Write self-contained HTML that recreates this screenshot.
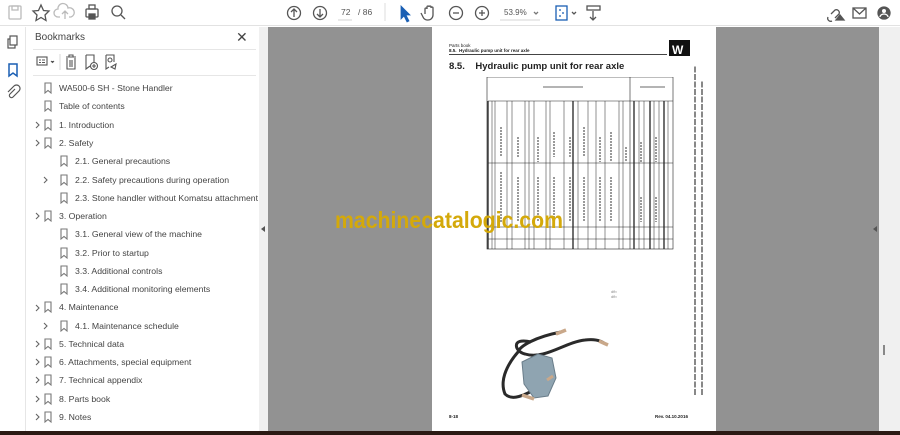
<!DOCTYPE html>
<html><head><meta charset="utf-8"><style>
*{margin:0;padding:0;box-sizing:border-box}
body{width:900px;height:435px;overflow:hidden;background:#fff;font-family:"Liberation Sans",sans-serif;position:relative}
.abs{position:absolute}
.bm{position:absolute;font-size:8.7px;color:#444;white-space:nowrap}
</style></head><body>
<div class="abs" style="left:0;top:0;width:900px;height:26px;background:#fff;border-bottom:1px solid #e2e2e2"></div>
<svg class="abs" style="left:0;top:0" width="900" height="27" fill="none" stroke="#555" stroke-width="1.3">
 <rect x="9" y="6" width="12" height="13" rx="1" stroke="#bbb"/><rect x="12" y="6" width="6" height="4" stroke="#bbb"/>
 <path d="M41 5 L43.5 10.5 L49 11 L45 15 L46 20.5 L41 17.5 L36 20.5 L37 15 L33 11 L38.5 10.5Z"/>
 <path d="M60 17 h-2 a4 4 0 0 1 0-8 a5 5 0 0 1 10-1 a4 4 0 0 1 3 9 h-2 M65 19 v-8 M62 14 l3-3 3 3" stroke="#bbb"/>
 <rect x="86" y="9" width="12" height="8" rx="1"/><rect x="89" y="5" width="6" height="4"/><rect x="89" y="14" width="6" height="5" fill="#555"/>
 <circle cx="117" cy="11" r="5"/><path d="M121 15 l4 4"/>
 <circle cx="294" cy="13" r="6.5"/><path d="M294 17 v-8 M291 12 l3-3 3 3"/>
 <circle cx="320" cy="13" r="6.5"/><path d="M320 9 v8 M317 14 l3 3 3-3"/>
 <path d="M338 20 h14" stroke="#ddd"/>
 <path d="M385 3 v18" stroke="#e5e5e5"/>
 <path d="M401 6 v13 l3-3 3 6 2-1-3-6 h4z" fill="#1a5fb4" stroke="#1a5fb4" stroke-width="0.8"/>
 <path d="M425 14 v-5 a1 1 0 0 1 2 0 v-2 a1 1 0 0 1 2 0 v0 a1 1 0 0 1 2 0 v1 a1 1 0 0 1 2 0 v7 a5 5 0 0 1 -5 5 h-1 a5 5 0 0 1 -4-3 l-2-4"/>
 <circle cx="456" cy="13" r="6.5"/><path d="M453 13 h6"/>
 <circle cx="482" cy="13" r="6.5"/><path d="M479 13 h6 M482 10 v6"/>
 <path d="M500 20 h40" stroke="#ddd"/><path d="M534 12 l2 2 2-2" stroke="#777"/>
 <rect x="556" y="6" width="11" height="14" stroke="#1a5fb4"/><path d="M559 10 h2 M562 13 h2 M559 16 h2" stroke="#1a5fb4"/><path d="M572 12 l2 2 2-2" stroke="#555"/>
 <rect x="587" y="6" width="13" height="4"/><path d="M593 11 v9 M590 17 l3 3 3-3"/>
 <path d="M831 14 l4-4 a3 3 0 0 1 4 4 l-4 4 M828 17 a3 3 0 0 0 4 4"/><path d="M836 20 l4-5 4 5z" fill="#555"/>
 <rect x="853" y="8" width="13" height="10"/><path d="M853 8 l6.5 6 6.5-6"/>
 <circle cx="884" cy="13" r="6" fill="#555"/><circle cx="884" cy="11" r="2" fill="#fff" stroke="none"/><path d="M880 17 a4 3 0 0 1 8 0" stroke="#fff"/>
</svg>
<div class="abs" style="left:341px;top:7px;font-size:8.5px;color:#555">72</div>
<div class="abs" style="left:358px;top:7px;font-size:8.5px;color:#555">/ 86</div>
<div class="abs" style="left:504px;top:8px;font-size:8px;color:#555">53.9%</div>

<div class="abs" style="left:0;top:27px;width:26px;height:405px;background:#fff;border-right:1px solid #e6e6e6"></div>
<svg class="abs" style="left:0;top:27px" width="26" height="80" fill="none" stroke="#555" stroke-width="1.2">
 <rect x="8" y="12" width="7" height="9"/><rect x="10" y="9" width="7" height="9" fill="#fff"/>
 <path d="M9 37 h8 v12 l-4-3 -4 3z" stroke="#1a5fb4" stroke-width="1.5"/>
 <path d="M15 62 l-5 5 a2 2 0 0 0 3 3 l6-6 a3.5 3.5 0 0 0-5-5 l-6 6"/>
</svg>
<div class="abs" style="left:27px;top:27px;width:232px;height:405px;background:#fff"></div>
<div class="abs" style="left:259px;top:27px;width:9px;height:405px;background:#f0f0f0"></div>
<div class="abs" style="left:35px;top:32px;font-size:10px;color:#444">Bookmarks</div>
<div class="abs" style="left:236px;top:29px;font-size:14px;color:#444">✕</div>
<div class="abs" style="left:33px;top:49px;width:223px;height:1px;background:#e6e6e6"></div>
<div class="abs" style="left:33px;top:75px;width:223px;height:1px;background:#e6e6e6"></div>
<svg class="abs" style="left:30px;top:50px" width="100" height="25" fill="none" stroke="#555" stroke-width="1.1">
 <rect x="7" y="7" width="10" height="8"/><path d="M9 10 h2 M12 10 h3 M9 12.5 h2 M12 12.5 h3"/><path d="M21 11 l1.5 1.5 1.5-1.5" fill="#555"/>
 <path d="M30 4 v16" stroke="#ddd"/>
 <path d="M36 7 h10 M39 7 v-2 h4 v2 M37 8 v11 h8 v-11 M40 10 v7 M42 10 v7"/>
 <path d="M56 5 h8 v8 M56 5 v14 l4-3"/><circle cx="64" cy="16" r="3.5"/><path d="M64 14 v4 M62 16 h4"/>
 <path d="M76 5 h8 v7 M76 5 v14 l3-2"/><circle cx="80" cy="10" r="2"/><path d="M81 17 l5-3 -1 5z"/>
</svg>
<svg class="abs" style="left:0;top:0" width="260" height="432" fill="none" stroke="#666" stroke-width="1.1">
 <path d="M36 122 l3 3 -3 3 M36 140 l3 3 -3 3 M44 177 l3 3 -3 3 M36 213 l3 3 -3 3 M36 305 l3 3 -3 3 M44 323 l3 3 -3 3 M36 341 l3 3 -3 3 M36 359 l3 3 -3 3 M36 377 l3 3 -3 3 M36 396 l3 3 -3 3 M36 414 l3 3 -3 3"/>
 <g stroke="#777">
 <path d="M45 83 h6 v10 l-3-2.5 -3 2.5z"/><path d="M45 101 h6 v10 l-3-2.5 -3 2.5z"/><path d="M45 120 h6 v10 l-3-2.5 -3 2.5z"/><path d="M45 138 h6 v10 l-3-2.5 -3 2.5z"/>
 <path d="M61 156 h6 v10 l-3-2.5 -3 2.5z"/><path d="M61 175 h6 v10 l-3-2.5 -3 2.5z"/><path d="M61 193 h6 v10 l-3-2.5 -3 2.5z"/>
 <path d="M45 211 h6 v10 l-3-2.5 -3 2.5z"/><path d="M61 229 h6 v10 l-3-2.5 -3 2.5z"/><path d="M61 248 h6 v10 l-3-2.5 -3 2.5z"/><path d="M61 266 h6 v10 l-3-2.5 -3 2.5z"/><path d="M61 284 h6 v10 l-3-2.5 -3 2.5z"/>
 <path d="M45 302 h6 v10 l-3-2.5 -3 2.5z"/><path d="M61 321 h6 v10 l-3-2.5 -3 2.5z"/><path d="M45 339 h6 v10 l-3-2.5 -3 2.5z"/><path d="M45 357 h6 v10 l-3-2.5 -3 2.5z"/><path d="M45 375 h6 v10 l-3-2.5 -3 2.5z"/><path d="M45 394 h6 v10 l-3-2.5 -3 2.5z"/><path d="M45 412 h6 v10 l-3-2.5 -3 2.5z"/>
 </g>
</svg>
<div class="bm" style="left:59px;top:83px">WA500-6 SH - Stone Handler</div>
<div class="bm" style="left:59px;top:101px">Table of contents</div>
<div class="bm" style="left:59px;top:120px">1. Introduction</div>
<div class="bm" style="left:59px;top:138px">2. Safety</div>
<div class="bm" style="left:75px;top:156px">2.1. General precautions</div>
<div class="bm" style="left:75px;top:175px">2.2. Safety precautions during operation</div>
<div class="bm" style="left:75px;top:193px">2.3. Stone handler without Komatsu attachment</div>
<div class="bm" style="left:59px;top:211px">3. Operation</div>
<div class="bm" style="left:75px;top:229px">3.1. General view of the machine</div>
<div class="bm" style="left:75px;top:248px">3.2. Prior to startup</div>
<div class="bm" style="left:75px;top:266px">3.3. Additional controls</div>
<div class="bm" style="left:75px;top:284px">3.4. Additional monitoring elements</div>
<div class="bm" style="left:59px;top:302px">4. Maintenance</div>
<div class="bm" style="left:75px;top:321px">4.1. Maintenance schedule</div>
<div class="bm" style="left:59px;top:339px">5. Technical data</div>
<div class="bm" style="left:59px;top:357px">6. Attachments, special equipment</div>
<div class="bm" style="left:59px;top:375px">7. Technical appendix</div>
<div class="bm" style="left:59px;top:394px">8. Parts book</div>
<div class="bm" style="left:59px;top:412px">9. Notes</div>

<div class="abs" style="left:268px;top:27px;width:611px;height:405px;background:#929292"></div>
<div class="abs" style="left:879px;top:27px;width:21px;height:405px;background:#f0f0f0"></div>
<div class="abs" style="left:883px;top:345px;width:2px;height:10px;background:#888"></div>
<svg class="abs" style="left:259px;top:224px" width="10" height="10"><path d="M6 2 v6 l-4-3z" fill="#555"/></svg>
<svg class="abs" style="left:871px;top:224px" width="10" height="10"><path d="M6 2 v6 l-4-3z" fill="#555"/></svg>
<div class="abs" style="left:0;top:431px;width:900px;height:4px;background:#2b1a14"></div>

<div class="abs" style="left:432px;top:27px;width:284px;height:404px;background:#fff"></div>
<div class="abs" style="left:449px;top:43px;font-size:4.5px;color:#222;line-height:5px">Parts book<br><b>8.5.&nbsp; Hydraulic pump unit for rear axle</b></div>
<div class="abs" style="left:449px;top:54px;width:218px;height:1px;background:#444"></div>
<div class="abs" style="left:669px;top:40px;width:21px;height:16px;background:#111"></div>
<div class="abs" style="left:672px;top:44px;color:#fff;font-weight:bold;font-size:12px;line-height:12px">W</div>
<div class="abs" style="left:449px;top:61px;font-size:9.5px;font-weight:bold;color:#222">8.5.&nbsp;&nbsp;&nbsp; Hydraulic pump unit for rear axle</div>
<svg class="abs" style="left:478px;top:77px" width="200" height="175" fill="none" stroke="#222" stroke-width="0.6">
 <rect x="9" y="0" width="186" height="172"/>
 <path d="M10 24 h185 M10 86 h185 M10 150 h185 M10 162 h185 M152 0 v172"/>
 <g stroke-width="0.5">
 <path d="M14 24 v148 M17 24 v148 M29 24 v148 M34 24 v148 M47 24 v148 M51 24 v148 M56 24 v148 M68 24 v148 M72 24 v148 M86 24 v148 M95 24 v148 M100 24 v148 M110 24 v148 M118 24 v148 M127 24 v148 M141 24 v148 M145 24 v148 M156 24 v148 M161 24 v148 M166 24 v148 M172 24 v148 M176 24 v148 M181 24 v148 M186 24 v148 M190 24 v148"/>
 </g>
 <g stroke-width="1.3"><path d="M10 24 v148 M95 24 v148 M172 24 v148 M186 24 v148 M156 24 v148"/></g>
 <g stroke="#999" stroke-width="2" stroke-dasharray="2 1">
 <path d="M23 50 v30 M40 60 v20 M60 60 v25 M76 55 v25 M92 60 v20 M106 50 v30 M122 60 v25 M133 55 v30 M148 70 v15 M163 65 v20 M178 60 v25 M23 95 v50 M40 100 v45 M60 100 v45 M76 100 v45 M92 100 v45 M106 100 v45 M122 100 v45 M133 100 v45 M163 120 v25 M178 120 v25"/>
 </g>
 <path d="M65 10 h40 M162 10 h25" stroke="#888" stroke-width="1.2"/>
</svg>
<svg class="abs" style="left:690px;top:60px" width="20" height="340"><g stroke="#888" stroke-width="2" stroke-dasharray="6 1.5"><path d="M5 335 V5 M12 335 V20"/></g></svg>
<div class="abs" style="left:611px;top:289px;font-size:4px;color:#888;line-height:5px">dfb<br>dfb</div>
<svg class="abs" style="left:425px;top:282px" width="200" height="131" fill="none">
 <path d="M106 60 C85 55 90 70 100 72 C120 78 140 60 160 58 C175 56 180 62 180 62" stroke="#2a2a2a" stroke-width="3"/>
 <path d="M136 50 C110 55 95 64 93 70 C80 85 75 100 80 112 C86 118 95 115 105 110 C118 100 122 85 120 75" stroke="#2a2a2a" stroke-width="3"/>
 <path d="M131 52 l10-4" stroke="#c9a88a" stroke-width="3.5"/>
 <path d="M174 59 l9 4" stroke="#c9a88a" stroke-width="3.5"/>
 <path d="M97 80 l16-8 14 4 4 20 -8 18 -14 2 -10 -14z" fill="#8fa4b1" stroke="#6a7d8a"/>
 <path d="M97 113 l12 4" stroke="#c9a88a" stroke-width="3.5"/>
 <path d="M122 98 l6 -4" stroke="#c9a88a" stroke-width="3"/>
</svg>
<div class="abs" style="left:449px;top:414px;font-size:4.5px;font-weight:bold;color:#222">8-18</div>
<div class="abs" style="left:655px;top:414px;font-size:4.5px;font-weight:bold;color:#222">Rev. 04.10.2016</div>

<svg class="abs" style="left:330px;top:205px" width="250" height="30"><text x="5" y="23" textLength="228" lengthAdjust="spacingAndGlyphs" font-family="Liberation Sans" font-weight="bold" font-size="23" fill="#d4a90a">machinecatalogic.com</text></svg>
</body></html>
